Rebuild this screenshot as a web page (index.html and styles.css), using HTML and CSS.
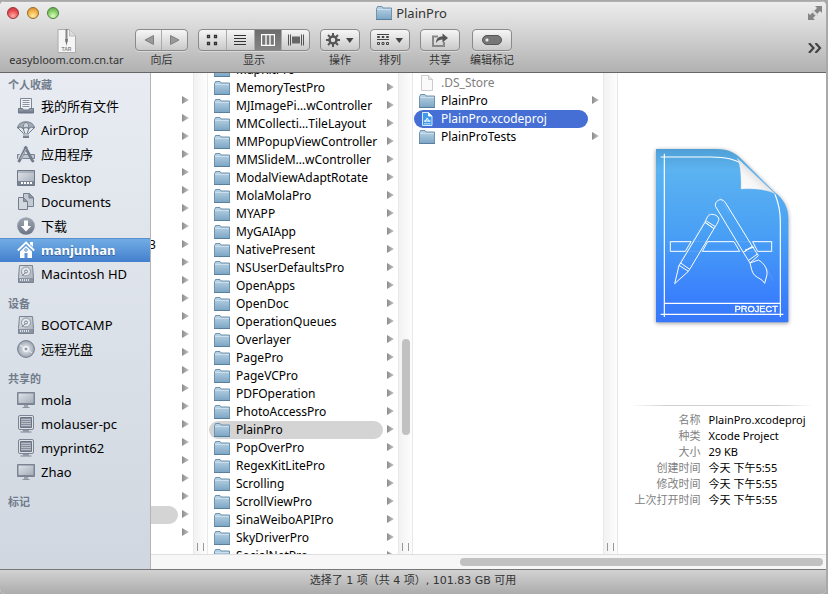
FILE: index.html
```html
<!DOCTYPE html>
<html lang="zh-CN">
<head>
<meta charset="utf-8">
<title>PlainPro</title>
<link rel="stylesheet" href="styles.css">
</head>
<body>
<svg class="defs" aria-hidden="true">
  <defs>
    <linearGradient id="gFolder" x1="0" y1="0" x2="0" y2="1"><stop offset="0" stop-color="#bcd5e6"/><stop offset="1" stop-color="#7ba5c4"/></linearGradient>
    <linearGradient id="gSteel" x1="0" y1="0" x2="0" y2="1"><stop offset="0" stop-color="#a0a7b3"/><stop offset="1" stop-color="#6b7484"/></linearGradient>
    <linearGradient id="gPale" x1="0" y1="0" x2="1" y2="1"><stop offset="0" stop-color="#dfe3e9"/><stop offset="1" stop-color="#a4acb8"/></linearGradient>
    <linearGradient id="gBlue" x1="0" y1="0" x2="0" y2="1"><stop offset="0" stop-color="#4f9fd6"/><stop offset=".12" stop-color="#5cb3f0"/><stop offset=".5" stop-color="#489ff5"/><stop offset=".85" stop-color="#3a80fd"/><stop offset="1" stop-color="#3778f8"/></linearGradient>
    <linearGradient id="gCurl" x1="0" y1="1" x2=".6" y2=".4"><stop offset="0" stop-color="#fff"/><stop offset=".6" stop-color="#f6f6f6"/><stop offset="1" stop-color="#d8d8d8"/></linearGradient>
    <radialGradient id="gDisc"><stop offset="0" stop-color="#fff"/><stop offset=".2" stop-color="#8e97a5"/><stop offset=".35" stop-color="#d5dae1"/><stop offset="1" stop-color="#9ba4b1"/></radialGradient>
  </defs>
  <symbol id="folder" viewBox="0 0 16 14">
    <path d="M.5 13.5v-11L1.5 1V.5h4.500l1 1.500h8.500v11.500z" fill="url(#gFolder)" stroke="#6f93ad"/>
    <path d="M1 3.500h14" stroke="#d5e5f0" opacity=".8"/><path d="M0 13.500h16" stroke="#58809e"/>
  </symbol>
  <symbol id="file" viewBox="0 0 16 16">
    <path d="M2.500.5h7l4 4v11h-11z" fill="#fafafa" stroke="#ccc"/><path d="M9.500.5v4h4" fill="#e8e8e8" stroke="#ccc"/>
  </symbol>
  <symbol id="project" viewBox="0 0 16 16">
    <path d="M3.500 1.500h6l3.500 3.500v9.500H3.500z" fill="#3f9bea" stroke="#d5ecff"/><path d="M9.500 1.500V5H13" fill="#fff" stroke="#fff"/>
    <path d="M6 11 8.200 7l2.300 4M5 10h6.500" fill="none" stroke="#fff"/><path d="M5 12.800h6.500" stroke="#bfe0ff"/>
  </symbol>
  <symbol id="allfiles" viewBox="0 0 18 18">
    <path d="M3.500 11V1.500h11V11" fill="#f0f2f5" stroke="#7d8695"/><path d="M5.500 3.500h7m-7 2h7m-7 2h7m-7 2h7" stroke="#8b94a1"/>
    <path d="M1.500 11.500h4l1 1.500h5l1-1.500h4v4.500h-15z" fill="url(#gSteel)" stroke="#6f7887"/>
  </symbol>
  <symbol id="airdrop" viewBox="0 0 18 18">
    <path d="M.5 7C1 3 4.500.8 9 .8S17 3 17.500 7l-2.700-1-3 1.500L9 6.500 6.200 7.500l-3-1.500z" fill="#a3abb7" stroke="#6f7887"/>
    <path d="M6 7Q6 3 9 1q3 2 3 6l-3-.8z" fill="#d3d8df" stroke="#7c8593"/><path d="m1 7 6 6M17 7l-6 6M6 7l2 6m4-6-2 6" stroke="#6f7887"/>
    <path d="M6 12.500h6v4.500H6z" fill="url(#gSteel)"/><path d="M6 14h6" stroke="#dfe3e8"/>
  </symbol>
  <symbol id="apps" viewBox="0 0 18 18">
    <path d="M.5 9.500h17v4H.5z" fill="#c1c8d1" stroke="#7b8492"/>
    <path d="M8 1.500 3 14l-1.500 3.500" fill="none" stroke="#dfe3e9" stroke-width="4"/><path d="m9.500 1.500-7 14L1.500 17M8 1.500l7 13.500 1.500 2" fill="none" stroke="#737c8b" stroke-width="2.800"/><path d="m9 4-5.500 10" stroke="#b8bfc9"/>
  </symbol>
  <symbol id="desktop" viewBox="0 0 18 18">
    <path d="M.5 1.500h17v15H.5z" fill="url(#gPale)" stroke="#6f7887"/><path d="M1 3h16" stroke="#8a93a0"/><path d="M1 12h16v4H1z" fill="#7b8492"/><path d="M4 14h2m1 0h2m1 0h2m1 0h2" stroke="#fff" stroke-width="2"/>
  </symbol>
  <symbol id="docs" viewBox="0 0 18 18">
    <path d="M6.500.5h6L16.500 4.500v9H6.500z" fill="#c3cad3" stroke="#747d8c"/><path d="M12 .5V5h4.500" fill="#8b94a2" stroke="#747d8c"/>
    <path d="M1.500 4.500h5L10.500 8.500v8H1.500z" fill="#d3d8df" stroke="#747d8c"/><path d="M6.500 4.500v4h4" fill="#8b94a2" stroke="#747d8c"/>
  </symbol>
  <symbol id="down" viewBox="0 0 18 18"><circle cx="9" cy="9" r="8.800" fill="url(#gSteel)"/><path d="M7 3.500h4V9h3.200L9 14.500 3.800 9H7z" fill="#fff"/></symbol>
  <symbol id="home" viewBox="0 0 18 18">
    <path d="m.8 9.500 8.200-8 8.200 8" fill="none" stroke="#fff" stroke-width="1.800"/><path d="M13 1h3v5l-3-3z" fill="#fff"/><path d="M3 10.500 9 5l6 5.500V17H3z" fill="#fff"/>
    <path d="M7.500 12h3v5h-3z" fill="#5b94d2"/><circle cx="9" cy="9" r="1.300" fill="none" stroke="#5b94d2"/>
  </symbol>
  <symbol id="hd" viewBox="0 0 18 18">
    <path d="M2.500.5h13l1 12v5h-15v-5z" fill="url(#gPale)" stroke="#7b8492"/><circle cx="9" cy="6.500" r="4.500" fill="#e5e8ed" stroke="#8d96a3"/><circle cx="9" cy="6.500" r="1.500" fill="none" stroke="#7b8492"/><path d="m5 11 3-3" stroke="#7b8492"/>
    <path d="M2 13h14v4H2z" fill="#8a93a1"/><path d="M3.500 14v2m2-2v2m2-2v2m2-2v2m2-2v2" stroke="#dfe3e8"/>
  </symbol>
  <symbol id="disc" viewBox="0 0 18 18"><circle cx="9" cy="9" r="8.400" fill="url(#gDisc)" stroke="#757e8d"/><circle cx="9" cy="9" r="2.500" fill="#cbd1d9" stroke="#fff"/><circle cx="9" cy="9" r="1" fill="#7c8594"/><path d="m3 5 4 3m4 2 4 3" stroke="#eef0f3"/></symbol>
  <symbol id="imac" viewBox="0 0 18 18"><path d="M.5 1.500h17v12H.5z" fill="#7d8695" stroke="#7b8493"/><path d="M1.500 2.500h15v9.500h-15z" fill="url(#gPale)"/><path d="M7 14h4v2H7z" fill="#9ba3b0"/><path d="M5.500 16.500h7" stroke="#8a93a0"/></symbol>
  <symbol id="pc" viewBox="0 0 18 18"><rect x="1.500" y=".5" width="15" height="14" rx="1.500" fill="#dfe3e8" stroke="#7b8493"/><path d="M3.500 2.500h11v10h-11z" fill="#868f9d" stroke="#6b7483"/><path d="M4 4.500h10m-10 2h10m-10 2h10m-10 2h10" stroke="#b7bec8"/><path d="M6 15h6v1.500H6z" fill="#8a93a0"/><path d="M3.500 17h11" stroke="#7b8493"/></symbol>
</svg>

<main class="window">
  <header class="chrome">
    <div class="titlebar">
      <div class="lights"><button class="light red" aria-label="关闭"></button><button class="light amber" aria-label="最小化"></button><button class="light green" aria-label="缩放"></button></div>
      <h1 class="title"><svg class="folder"><use href="#folder"/></svg>PlainPro</h1>
      <button class="bare full" aria-label="全屏"><svg width="14" height="14" viewBox="0 0 14 14"><path d="M14 0v7l-2-2-3 3-3-3 3-3-2-2zM0 14V7l2 2 2.500-2.500 3 3L5 12l2 2z" fill="#858585"/><path d="m4 4 6 6" stroke="#d9d9d9" stroke-width="2"/></svg></button>
    </div>
    <div class="toolbar">
      <div class="tool item">
        <button class="bare doc" id="tar"><svg width="20" height="24" viewBox="0 0 20 24"><path d="M1 .5h11.500L18.500 7v16.500H1z" fill="#f5f5f5" stroke="#aaa"/><path d="M12.500.5V7h6" fill="#ddd" stroke="#bbb"/><path d="M9.500 0v13" stroke="#888" stroke-width="2"/><path d="M8 10h3l-1.500 7z" fill="#777"/><text x="9.500" y="22" class="tartext">TAR</text></svg></button>
        <label for="tar">easybloom.com.cn.tar</label>
      </div>
      <div class="tool">
        <div class="group nav">
          <button aria-label="向后"><svg width="10" height="10" viewBox="0 0 10 10"><path d="M9.500.5v9L1 5z" fill="#999" stroke="#808080"/></svg></button>
          <button aria-label="向前"><svg width="10" height="10" viewBox="0 0 10 10"><path d="M.5.5v9L9 5z" fill="#999" stroke="#808080"/></svg></button>
        </div>
        <span>向后</span>
      </div>
      <div class="tool">
        <div class="group views">
          <button aria-label="图标"><svg width="12" height="12" viewBox="0 0 12 12"><path d="M1.500 1.500h2v2h-2zM8.500 1.500h2v2h-2zM1.500 8.500h2v2h-2zM8.500 8.500h2v2h-2z" fill="none" stroke="#333" stroke-width="1.300"/></svg></button>
          <button aria-label="列表"><svg width="12" height="12" viewBox="0 0 12 12"><path d="M0 1.500h12m-12 3h12m-12 3h12m-12 3h12" stroke="#333"/></svg></button>
          <button aria-label="分栏" class="on"><svg width="14" height="12" viewBox="0 0 14 12"><path d="M.5.500h13v11H.5zM5 1v10M9 1v10" fill="#777" stroke="#fff" stroke-width="1.300"/></svg></button>
          <button aria-label="Cover Flow"><svg width="16" height="12" viewBox="0 0 16 12"><path d="M.5.500v11m2-11v11m11-11v11m2-11v11" stroke="#555"/><path d="M4 2.500h8v7H4z" fill="#666"/></svg></button>
        </div>
        <span>显示</span>
      </div>
      <div class="tool">
        <button class="push" id="act"><svg width="28" height="14" viewBox="0 0 28 14"><circle cx="7" cy="7" r="3.500" fill="none" stroke="#555" stroke-width="2.500"/><path d="M7 0v3m0 8v3M0 7h3m8 0h3M2 2l2 2m6 6 2 2M12 2l-2 2M4 10l-2 2" stroke="#555" stroke-width="2"/><path d="M20 5h7.500l-3.700 5z" fill="#444"/></svg></button>
        <label for="act">操作</label>
      </div>
      <div class="tool">
        <button class="push" id="arr"><svg width="26" height="12" viewBox="0 0 26 12"><path d="M0 .5h12m-12 5h12" stroke="#444"/><path d="M.5 2.500h2v1h-2zm4.500 0h2v1H5zm4.500 0h2v1h-2zM.5 8.500h2v2h-2zm4.500 0h2v2H5zm4.500 0h2v2h-2z" fill="#ddd" stroke="#444"/><path d="M18.500 4H26l-3.700 5z" fill="#444"/></svg></button>
        <label for="arr">排列</label>
      </div>
      <div class="tool">
        <button class="push" id="share"><svg width="16" height="14" viewBox="0 0 16 14"><path d="M6 3.500H1v9.500h11V9" fill="none" stroke="#888" stroke-width="2"/><path d="M4 10c0-5 3-6.500 6.500-6.500V.5L16 5l-5.500 4.500v-3C8 6.500 6 7 4 10z" fill="#555"/></svg></button>
        <label for="share">共享</label>
      </div>
      <div class="tool">
        <button class="push" id="tag"><svg width="20" height="10" viewBox="0 0 20 10"><rect x=".5" y=".5" width="19" height="9" rx="4.500" fill="#777" stroke="#555"/><circle cx="5" cy="5" r="2.200" fill="#e8e8e8" stroke="#666"/></svg></button>
        <label for="tag">编辑标记</label>
      </div>
      <button class="bare more" aria-label="更多"><svg width="14" height="10" viewBox="0 0 14 10"><path d="m1 0 4.500 5L1 10M7.500 0 12 5l-4.500 5" fill="none" stroke="#444" stroke-width="2.200"/></svg></button>
    </div>
  </header>

  <div class="content">
    <nav class="sidebar">
      <h2>个人收藏</h2>
      <a href="#"><svg><use href="#allfiles"/></svg>我的所有文件</a>
      <a href="#"><svg><use href="#airdrop"/></svg>AirDrop</a>
      <a href="#"><svg><use href="#apps"/></svg>应用程序</a>
      <a href="#"><svg><use href="#desktop"/></svg>Desktop</a>
      <a href="#"><svg><use href="#docs"/></svg>Documents</a>
      <a href="#"><svg><use href="#down"/></svg>下载</a>
      <a href="#" class="current"><svg><use href="#home"/></svg>manjunhan</a>
      <a href="#"><svg><use href="#hd"/></svg>Macintosh HD</a>
      <h2>设备</h2>
      <a href="#"><svg><use href="#hd"/></svg>BOOTCAMP</a>
      <a href="#"><svg><use href="#disc"/></svg>远程光盘</a>
      <h2>共享的</h2>
      <a href="#"><svg><use href="#imac"/></svg>mola</a>
      <a href="#"><svg><use href="#pc"/></svg>molauser-pc</a>
      <a href="#"><svg><use href="#pc"/></svg>myprint62</a>
      <a href="#"><svg><use href="#imac"/></svg>Zhao</a>
      <h2>标记</h2>
    </nav>

    <section class="browser">
      <div class="columns">
        <ul class="column parent">
          <li></li><li></li><li></li><li></li><li></li><li></li><li></li><li></li><li>3</li><li></li><li></li><li></li><li></li><li></li><li></li><li></li><li></li><li></li><li></li><li></li><li></li><li></li><li></li><li class="picked"></li><li></li>
        </ul>
        <div class="gutter"></div>
        <ul class="column projects">
          <li><a href="#"><svg class="folder"><use href="#folder"/></svg>MapKitPro</a></li>
          <li><a href="#"><svg class="folder"><use href="#folder"/></svg>MemoryTestPro</a></li>
          <li><a href="#"><svg class="folder"><use href="#folder"/></svg>MJImagePi…wController</a></li>
          <li><a href="#"><svg class="folder"><use href="#folder"/></svg>MMCollecti…TileLayout</a></li>
          <li><a href="#"><svg class="folder"><use href="#folder"/></svg>MMPopupViewController</a></li>
          <li><a href="#"><svg class="folder"><use href="#folder"/></svg>MMSlideM…wController</a></li>
          <li><a href="#"><svg class="folder"><use href="#folder"/></svg>ModalViewAdaptRotate</a></li>
          <li><a href="#"><svg class="folder"><use href="#folder"/></svg>MolaMolaPro</a></li>
          <li><a href="#"><svg class="folder"><use href="#folder"/></svg>MYAPP</a></li>
          <li><a href="#"><svg class="folder"><use href="#folder"/></svg>MyGAIApp</a></li>
          <li><a href="#"><svg class="folder"><use href="#folder"/></svg>NativePresent</a></li>
          <li><a href="#"><svg class="folder"><use href="#folder"/></svg>NSUserDefaultsPro</a></li>
          <li><a href="#"><svg class="folder"><use href="#folder"/></svg>OpenApps</a></li>
          <li><a href="#"><svg class="folder"><use href="#folder"/></svg>OpenDoc</a></li>
          <li><a href="#"><svg class="folder"><use href="#folder"/></svg>OperationQueues</a></li>
          <li><a href="#"><svg class="folder"><use href="#folder"/></svg>Overlayer</a></li>
          <li><a href="#"><svg class="folder"><use href="#folder"/></svg>PagePro</a></li>
          <li><a href="#"><svg class="folder"><use href="#folder"/></svg>PageVCPro</a></li>
          <li><a href="#"><svg class="folder"><use href="#folder"/></svg>PDFOperation</a></li>
          <li><a href="#"><svg class="folder"><use href="#folder"/></svg>PhotoAccessPro</a></li>
          <li class="picked"><a href="#"><svg class="folder"><use href="#folder"/></svg>PlainPro</a></li>
          <li><a href="#"><svg class="folder"><use href="#folder"/></svg>PopOverPro</a></li>
          <li><a href="#"><svg class="folder"><use href="#folder"/></svg>RegexKitLitePro</a></li>
          <li><a href="#"><svg class="folder"><use href="#folder"/></svg>Scrolling</a></li>
          <li><a href="#"><svg class="folder"><use href="#folder"/></svg>ScrollViewPro</a></li>
          <li><a href="#"><svg class="folder"><use href="#folder"/></svg>SinaWeiboAPIPro</a></li>
          <li><a href="#"><svg class="folder"><use href="#folder"/></svg>SkyDriverPro</a></li>
          <li><a href="#"><svg class="folder"><use href="#folder"/></svg>SocialNetPro</a></li>
        </ul>
        <div class="gutter"><div class="thumb"></div></div>
        <ul class="column files">
          <li class="leaf dim"><a href="#"><svg class="file"><use href="#file"/></svg>.DS_Store</a></li>
          <li><a href="#"><svg class="folder"><use href="#folder"/></svg>PlainPro</a></li>
          <li class="leaf chosen"><a href="#"><svg class="file"><use href="#project"/></svg>PlainPro.xcodeproj</a></li>
          <li><a href="#"><svg class="folder"><use href="#folder"/></svg>PlainProTests</a></li>
        </ul>
        <div class="gutter"></div>
        <aside class="preview">
          <svg class="art" viewBox="72 36 408 540" fill="none" stroke="#fff" stroke-width="3">
            <path d="M78 42h180c40 0 62 14 82 36l92 92c30 22 43 48 43 82v310H78z" fill="url(#gBlue)" stroke="none"/>
            <path d="M103 56v490M92 66h150c50 0 70 8 92 18M92 538h368M451 546V258c0-35-6-55-16-80M103 505h348" stroke-width="3.500"/>
            <path d="M322 70c10 20 12 55 11 92 40-2 75 0 102 14z" fill="url(#gCurl)" stroke="#ddd" stroke-width="1"/>
            <path d="M121 320h62l-17 29h-45zM233 320h79l17 29H217zM368 320h57v29h-42z"/>
            <path d="M225 262 152 384l27 19 73-122zM225 262c6-14 10-24 20-24 12 0 24 8 21 18-3 8-8 16-14 25zM229 258l27 17M152 384l-5 8-13 54 40-36 5-7M147 391l28 18"/>
            <path d="M257 215c-4-12 6-20 14-21 8 0 12 4 16 10l80 130-27 18zM340 352l27-18 18 28-25 22zM345 345l28-9M356 376l26-19M360 384l25-9c15 8 28 24 26 44l-7 26c-6-12-20-15-30-24-10-10-10-25-14-37z"/>
            <path d="M112 320h320M112 349h320M268 184l30 50M240 230l-100 170M410 400l20 38" stroke-width="1" opacity=".4"/>
            <text x="444" y="531" class="arttext">PROJECT</text>
          </svg>
          <hr>
          <table>
            <tr><th>名称</th><td>PlainPro.xcodeproj</td></tr>
            <tr><th>种类</th><td>Xcode Project</td></tr>
            <tr><th>大小</th><td>29 KB</td></tr>
            <tr><th>创建时间</th><td>今天 下午5:55</td></tr>
            <tr><th>修改时间</th><td>今天 下午5:55</td></tr>
            <tr><th>上次打开时间</th><td>今天 下午5:55</td></tr>
          </table>
        </aside>
      </div>
      <div class="hscroll"><div class="hthumb"></div></div>
    </section>
  </div>

  <footer class="status">选择了 1 项（共 4 项）, 101.83 GB 可用</footer>
</main>
</body>
</html>
```
FILE: styles.css
```css
* { box-sizing: border-box; }
body {
  margin: 0;
  padding: 1px 2px 0 0;
  height: 100vh;
  overflow: hidden;
  background: #a9a9a9;
  color: #000;
  font: 13px/18px "Noto Sans", "Noto Sans CJK SC", sans-serif;
}
.defs { position: absolute; width: 0; height: 0; }
a { color: inherit; text-decoration: none; }
ul { margin: 0; padding: 0; list-style: none; }
button { margin: 0; padding: 0; border: 0; background: none; font: inherit; }
svg { display: block; flex: none; }

.window {
  display: flex;
  flex-direction: column;
  height: 100%;
  border-radius: 5px;
  overflow: hidden;
  background: #fff;
}

.chrome {
  flex: none;
  height: 72px;
  border-top: 1px solid #b0b0b0;
  border-bottom: 1px solid #666;
  background: linear-gradient(#ededed, #d3d3d3 45%, #b1b1b1);
}
.titlebar {
  display: grid;
  grid-template-columns: 1fr auto 1fr;
  align-items: center;
  height: 22px;
  padding: 0 4px 0 7px;
}
.lights { display: flex; gap: 8px; }
.light {
  width: 12px;
  height: 12px;
  border: 1px solid;
  border-radius: 50%;
}
.red { border-color: #94353a; background: radial-gradient(circle at 50% 80%, #ffb0a8, #e5484d 60%, #c8333b); }
.amber { border-color: #96692a; background: radial-gradient(circle at 50% 80%, #ffeda0, #efae43 60%, #cf8524); }
.green { border-color: #4d7f3d; background: radial-gradient(circle at 50% 80%, #d8ffb8, #80c864 60%, #539f40); }
.title {
  display: flex;
  align-items: center;
  gap: 4px;
  margin: 0 6px 0 0;
  color: #333;
  font-size: 13px;
  font-weight: 400;
}
.folder { width: 16px; height: 14px; }
.file { width: 16px; height: 16px; }
.full { justify-self: end; }

.toolbar {
  display: flex;
  align-items: flex-start;
  gap: 10px;
  padding: 5px 4px 0 8px;
}
.tool {
  display: flex;
  flex-direction: column;
  align-items: center;
  color: #333;
  font-size: 11px;
  line-height: 16px;
}
.item { width: 117px; }
.doc { height: 24px; }
.doc + label { margin-top: -1px; }
.tartext { font: bold 5px "Liberation Sans", sans-serif; text-anchor: middle; fill: #888; }
.group, .push {
  display: flex;
  height: 22px;
  margin-bottom: 1px;
  border: 1px solid #8a8a8a;
  border-radius: 4px;
  background: linear-gradient(#f6f6f6, #c9c9c9);
  box-shadow: 0 1px 0 #dadada;
  overflow: hidden;
}
.group button, .push { align-items: center; justify-content: center; }
.group button { display: flex; flex: 1; }
.push { width: 40px; }
.nav { width: 53px; }
.views { width: 112px; }
.group button + button { border-left: 1px solid #aaa; }
.group .on { background: linear-gradient(#6c6c6c, #858585); }
.more { margin: 14px 0 0 auto; }

.content { display: flex; flex: 1; min-height: 0; }
.sidebar {
  flex: none;
  width: 151px;
  border-right: 1px solid #b4b4b4;
  padding-top: 3px;
  background: linear-gradient(#e8ecf2, #d0d7e0);
}
.sidebar h2 {
  margin: 9px 0 0;
  padding-left: 8px;
  color: #717c8c;
  font-size: 11px;
  line-height: 18px;
  font-weight: 700;
}
.sidebar h2:first-child { margin-top: 0; }
.sidebar a {
  display: flex;
  align-items: center;
  gap: 6px;
  height: 24px;
  padding-left: 17px;
  white-space: nowrap;
}
.sidebar svg { width: 18px; height: 18px; }
.sidebar .current {
  background: linear-gradient(#73aee6, #437fcd);
  box-shadow: inset 0 1px 0 #5690cf;
  color: #fff;
  font-weight: 700;
  text-shadow: 0 1px 1px #2c5a96;
}

.browser { display: flex; flex: 1; flex-direction: column; min-width: 0; }
.columns {
  display: grid;
  grid-template-columns: 42px 15px 190px 15px 190px 15px 1fr;
  grid-template-rows: 100%;
  flex: 1;
  min-height: 0;
}
.column { overflow: hidden; font-size: 12px; }
.column li {
  position: relative;
  height: 18px;
  margin-left: 1px;
  white-space: nowrap;
}
.column li::after {
  content: "";
  position: absolute;
  top: 4px;
  right: 4px;
  width: 7px;
  height: 8px;
  background: linear-gradient(90deg, #8c8c8c, #c4c4c4);
  clip-path: polygon(0 0, 100% 50%, 0 100%);
}
.column .leaf::after { display: none; }
.column a {
  display: flex;
  align-items: center;
  gap: 6px;
  height: 18px;
  margin-right: 15px;
  padding-left: 5px;
  border-radius: 9px;
}
.parent { padding-top: 19px; }
.parent li { margin-left: -2px; }
.parent .picked::before {
  content: "";
  display: block;
  width: 29px;
  height: 18px;
  border-radius: 0 9px 9px 0;
  background: #d4d4d4;
}
.projects li:first-child { margin-top: -12px; }
.picked a { background: #d4d4d4; }
.files { padding-top: 1px; }
.dim a { color: #808080; }
.chosen a { background: #456fd5; color: #fff; }

.gutter {
  display: flex;
  flex-direction: column;
  align-items: center;
  border: solid #e8e8e8;
  border-width: 0 1px;
  background: linear-gradient(90deg, #f2f2f2, #fdfdfd);
}
.gutter::after {
  content: "";
  width: 5px;
  height: 8px;
  margin: auto 0 3px;
  border: solid #999;
  border-width: 0 1px;
}
.thumb { width: 8px; height: 20%; margin-top: 266px; border-radius: 4px; background: #c1c1c1; }

.preview {
  display: flex;
  flex-direction: column;
  align-items: center;
  padding-top: 74px;
  min-width: 0;
}
.art { width: 136px; height: 180px; filter: drop-shadow(0 1px 2px #999); }
.arttext { font: 28px "Liberation Sans", sans-serif; text-anchor: end; fill: #fff; stroke: #fff; stroke-width: 1; }
.preview hr {
  width: 88%;
  height: 1px;
  margin: 78px 0 6px;
  border: 0;
  background: linear-gradient(90deg, #fff, #d0d0d0 20%, #d0d0d0 80%, #fff);
}
.preview table {
  border-collapse: collapse;
  font-size: 11px;
  line-height: 16px;
  white-space: nowrap;
}
.preview th, .preview td { padding: 0; }
.preview th { padding-right: 8px; color: #808080; font-weight: 400; text-align: right; }
.preview td { padding-right: 4px; text-align: left; }

.hscroll {
  display: flex;
  flex: none;
  justify-content: flex-end;
  align-items: center;
  height: 15px;
  padding-right: 3px;
  border-top: 1px solid #dedede;
  background: #f7f7f7;
}
.hthumb { width: 54%; height: 8px; border-radius: 4px; background: #c1c1c1; }

.status {
  flex: none;
  height: 25px;
  border-top: 1px solid #777;
  background: linear-gradient(#d2d2d2, #acacac);
  color: #333;
  font-family: "DejaVu Sans", "Noto Sans CJK SC", sans-serif;
  font-size: 11px;
  line-height: 22px;
  text-align: center;
}
```
